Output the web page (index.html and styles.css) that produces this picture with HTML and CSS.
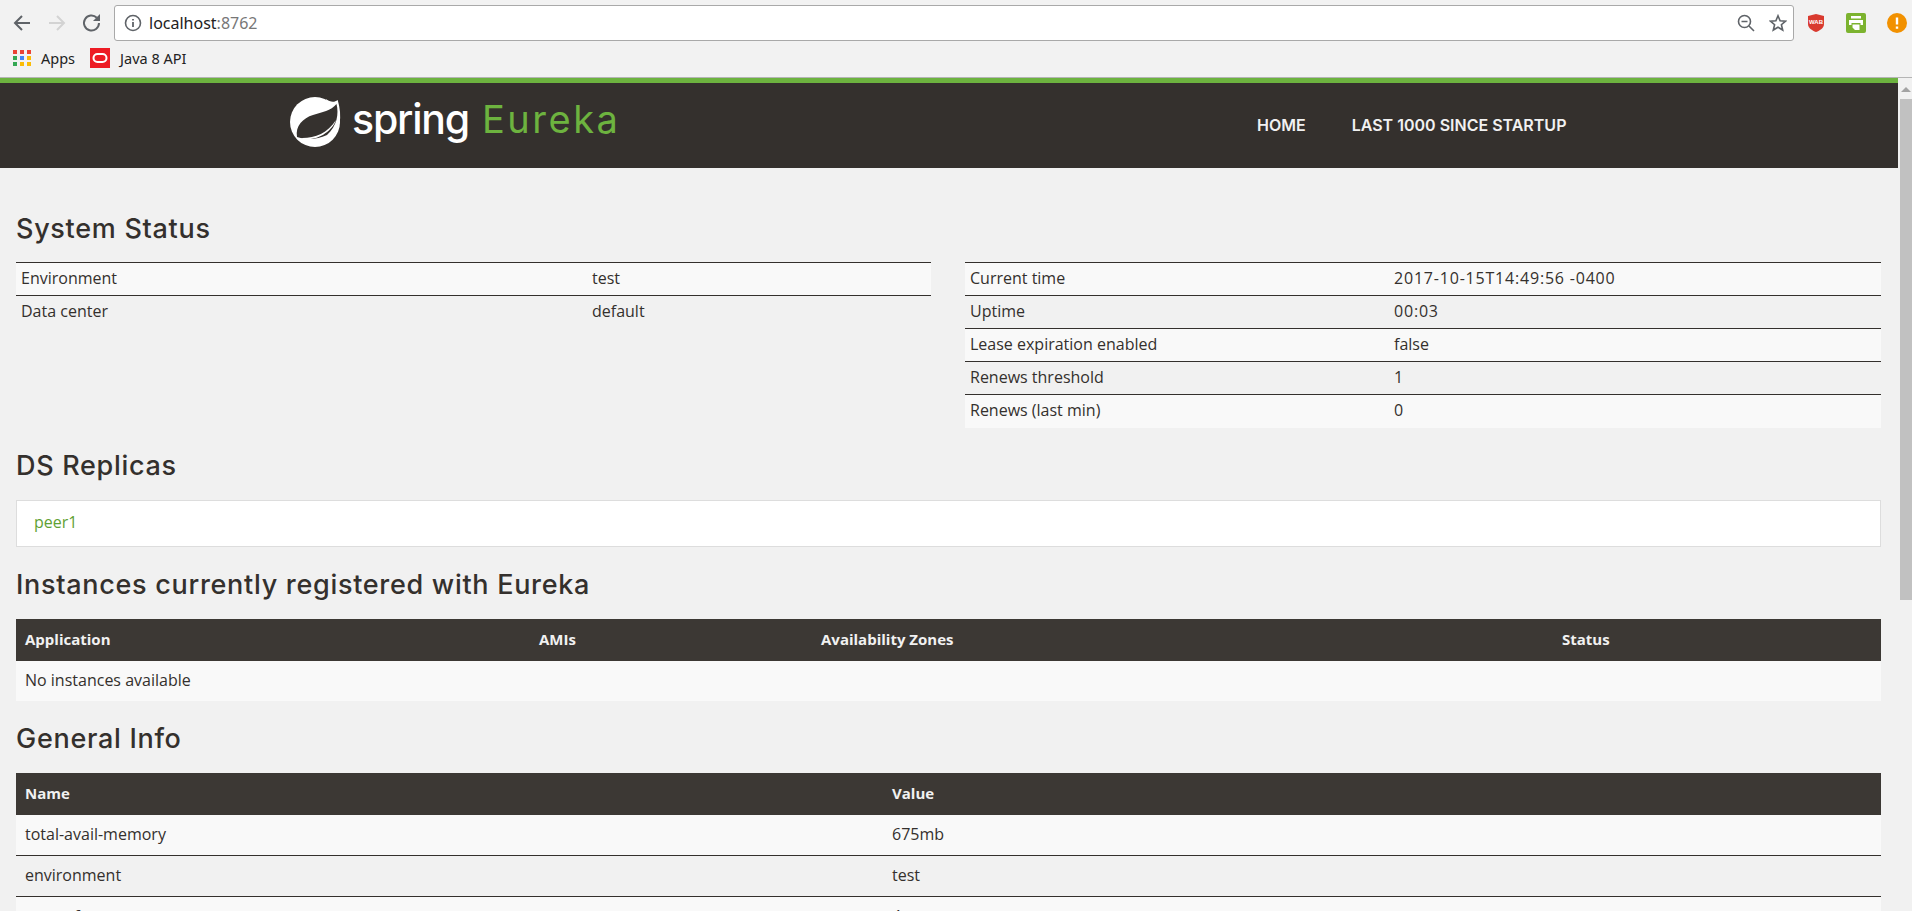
FILE: index.html
```html
<!DOCTYPE html>
<html>

<head>
    <title>Eureka</title>
<meta name="viewport" content="width=device-width, initial-scale=1">
<link rel="stylesheet" href="styles.css">
</head>

<body>

<!-- browser toolbar -->
<div class="toolbar">
    <svg class="tool" width="22" height="22" viewBox="0 0 22 22"><path d="M19 11H4M11 4l-7 7 7 7" fill="none" stroke="#5f6368" stroke-width="2"/></svg>
    <svg class="tool" width="22" height="22" viewBox="0 0 22 22"><path d="M3 11h15M11 4l7 7-7 7" fill="none" stroke="#d3d3d3" stroke-width="2"/></svg>
    <svg class="tool" width="22" height="22" viewBox="0 0 22 22"><path d="M18 11a7.5 7.5 0 1 1-2.2-5.3" fill="none" stroke="#5f6368" stroke-width="2"/><path d="M19 2v7h-7z" fill="#5f6368"/></svg>
    <div class="omnibox">
        <svg width="18" height="18" viewBox="0 0 18 18"><circle cx="9" cy="9" r="7.5" fill="none" stroke="#5f6368" stroke-width="1.6"/><path d="M9 8v5M9 5v1.6" stroke="#5f6368" stroke-width="1.8"/></svg>
        <span class="url">localhost<span class="port">:8762</span></span>
        <svg class="zoom-icon" width="18" height="18" viewBox="0 0 18 18"><circle cx="7.5" cy="7.5" r="6" fill="none" stroke="#5f6368" stroke-width="1.6"/><path d="M4.5 7.5h6M12 12l5 5" stroke="#5f6368" stroke-width="1.6"/></svg>
        <svg width="18" height="18" viewBox="0 0 18 18"><path d="M9 1.800l2.100 5 5.400.4-4.100 3.500 1.300 5.300L9 13.200l-4.700 2.800 1.300-5.300-4.100-3.500 5.400-.4z" fill="none" stroke="#5f6368" stroke-width="1.6"/></svg>
    </div>
    <div class="extensions">
        <svg width="18" height="20" viewBox="0 0 18 20"><path d="M1 3l8-2 8 2v8c0 4-4 6.500-8 8-4-1.500-8-4-8-8z" fill="#d93a2f"/><text x="9" y="11" class="wab">WAB</text></svg>
        <svg width="20" height="20" viewBox="0 0 20 20"><rect width="20" height="20" rx="2" fill="#7cb32f"/><path d="M5 3h10v2.500H5zM3 7h14v5h-2.500v-2h-9v2H3zM6.500 11.500h7V17H9l-2.500-2.500z" fill="#fff"/></svg>
        <svg width="20" height="20" viewBox="0 0 20 20"><circle cx="10" cy="10" r="10" fill="#f29100"/><path d="M10 4.500v7M10 13.500v2.200" stroke="#fff" stroke-width="2.400"/></svg>
    </div>
</div>

<div class="bookmarks">
    <span class="bookmark">
        <svg width="18" height="18" viewBox="0 0 18 18">
            <rect x="0" y="1" width="4" height="4" fill="#ea4335"/><rect x="7" y="1" width="4" height="4" fill="#ea4335"/><rect x="14" y="1" width="4" height="4" fill="#ea4335"/>
            <rect x="0" y="7" width="4" height="4" fill="#34a853"/><rect x="7" y="7" width="4" height="4" fill="#4285f4"/><rect x="14" y="7" width="4" height="4" fill="#fbbc05"/>
            <rect x="0" y="13" width="4" height="4" fill="#34a853"/><rect x="7" y="13" width="4" height="4" fill="#fbbc05"/><rect x="14" y="13" width="4" height="4" fill="#fbbc05"/>
        </svg>
        Apps
    </span>
    <span class="bookmark">
        <svg width="20" height="20" viewBox="0 0 20 20"><rect width="20" height="20" fill="#ed1c24"/><rect x="3.500" y="6" width="13" height="8" rx="4" fill="none" stroke="#fff" stroke-width="2"/></svg>
        Java 8 API
    </span>
</div>

<div class="window">
    <div class="page">
        <nav class="navbar">
            <a class="brand">
                <svg width="52" height="52" viewBox="0 0 52 52">
                    <circle cx="26" cy="26" r="25" fill="#fff"/>
                    <path d="M37 3C41 6 45 7 48.700 4 C51 12 52 20 50.500 28 L40 14z" fill="#fff"/>
                    <path d="M8 41C6 30 14 22 24 19 C33 16 42 15 47.500 8 C50 18 48 30 38 39 C28 44 16 44 8 41z" fill="#35312e"/>
                    <path d="M10 42C24 43 38 38 47 24 C43 36 26 47 10 42z" fill="#fff"/>
                </svg>
                <span class="brand-spring">spring</span>
                <span class="brand-eureka">Eureka</span>
            </a>
            <div class="nav-links">
                <a>HOME</a>
                <a>LAST 1000 SINCE STARTUP</a>
            </div>
        </nav>

        <div class="container">
            <h2 class="first">System Status</h2>
            <div class="columns">
                <table class="status status-left">
                    <tr><td>Environment</td><td>test</td></tr>
                    <tr><td>Data center</td><td>default</td></tr>
                </table>
                <table class="status status-right">
                    <tr><td>Current time</td><td class="num">2017-10-15T14:49:56 -0400</td></tr>
                    <tr><td>Uptime</td><td class="num">00:03</td></tr>
                    <tr><td>Lease expiration enabled</td><td>false</td></tr>
                    <tr><td>Renews threshold</td><td>1</td></tr>
                    <tr><td>Renews (last min)</td><td>0</td></tr>
                </table>
            </div>

            <h2>DS Replicas</h2>
            <div class="replicas"><a>peer1</a></div>

            <h2>Instances currently registered with Eureka</h2>
            <table class="data instances">
                <thead>
                    <tr><th>Application</th><th>AMIs</th><th>Availability Zones</th><th>Status</th></tr>
                </thead>
                <tbody>
                    <tr><td colspan="4">No instances available</td></tr>
                </tbody>
            </table>

            <h2>General Info</h2>
            <table class="data general">
                <thead>
                    <tr><th>Name</th><th>Value</th></tr>
                </thead>
                <tbody>
                    <tr><td>total-avail-memory</td><td>675mb</td></tr>
                    <tr><td>environment</td><td>test</td></tr>
                    <tr><td>num-of-cpus</td><td>4</td></tr>
                </tbody>
            </table>
        </div>
    </div>

    <div class="scrollbar">
        <div class="scroll-arrow"></div>
        <div class="scroll-thumb"></div>
    </div>
</div>

</body>
</html>
```

FILE: styles.css
```css
* {
  box-sizing: border-box;
}

html, body {
  margin: 0;
  height: 911px;
  overflow: hidden;
}

body {
  background-color: #f1f1f1;
  font-family: "Open Sans", sans-serif;
  font-size: 16px;
  color: #34302d;
}

/* Browser chrome */
.toolbar {
  height: 46px;
  display: flex;
  align-items: center;
  padding: 0 0 0 11px;
  background-color: #f2f2f2;
}

.tool {
  margin-right: 13px;
}

.omnibox {
  width: 1680px;
  height: 36px;
  margin-left: -2px;
  display: flex;
  align-items: center;
  gap: 7px;
  padding: 0 6px 0 9px;
  background-color: #fff;
  border: 1px solid #a9a9a9;
  border-radius: 3px;
}

.url {
  flex: 1;
  font-family: "Noto Sans", sans-serif;
  font-size: 16px;
  color: #222;
}

.port {
  color: #777;
}

.zoom-icon {
  margin-right: 7px;
}

.extensions {
  display: flex;
  align-items: center;
  gap: 21px;
  margin-left: 13px;
}

.wab {
  font-family: "Liberation Sans", sans-serif;
  font-size: 6px;
  font-weight: bold;
  fill: #fff;
  text-anchor: middle;
}

.bookmarks {
  height: 32px;
  display: flex;
  align-items: center;
  gap: 15px;
  padding: 0 0 7px 13px;
  background-color: #f2f2f2;
  border-bottom: 1px solid #b5b5b5;
  font-family: "Noto Sans", sans-serif;
  font-size: 14.500px;
  color: #222;
}

.bookmark {
  display: flex;
  align-items: center;
  gap: 10px;
}

/* Page area */
.window {
  display: flex;
  height: 833px;
}

.page {
  flex: 1;
  min-width: 0;
}

.scrollbar {
  width: 14px;
  background-color: #f1f1f1;
}

.scroll-arrow {
  width: 0;
  margin: 9px 0 0 3px;
  border-left: 5px solid transparent;
  border-right: 5px solid transparent;
  border-bottom: 5px solid #a3a3a3;
}

.scroll-thumb {
  height: 501px;
  margin: 7px 0 0 2px;
  background-color: #c1c1c1;
}

.navbar {
  height: 90px;
  display: flex;
  background-color: #34302d;
  border-top: 5px solid #6db33f;
}

.brand {
  display: flex;
  align-items: flex-start;
  padding: 13px 0 0 289px;
  width: 1257px;
}

.brand-spring {
  margin-left: 11px;
  font-family: "Inter", sans-serif;
  font-size: 41px;
  font-weight: 500;
  line-height: 46px;
  letter-spacing: -1.200px;
  color: #fff;
}

.brand-eureka {
  margin-left: 13px;
  font-family: "Inter", sans-serif;
  font-size: 38px;
  line-height: 46px;
  letter-spacing: 2.500px;
  color: #6db33f;
}

.nav-links {
  display: flex;
  gap: 46px;
  padding-top: 32px;
  font-family: "Inter", sans-serif;
  font-size: 16px;
  font-weight: 600;
  line-height: 20px;
  color: #f1f1f1;
}

.container {
  padding: 46px 17px 0 16px;
}

h2 {
  margin: 23px 0 19px;
  font-family: "Inter", sans-serif;
  font-size: 27px;
  font-weight: 500;
  line-height: 30px;
  letter-spacing: .7px;
  color: #34302d;
}

h2.first {
  margin-top: 0;
  margin-bottom: 18px;
}

.columns {
  display: flex;
  align-items: flex-start;
  gap: 34px;
  height: 166px;
}

table {
  width: 100%;
  border-collapse: collapse;
  table-layout: fixed;
}

.status-left {
  flex: none;
  width: 915px;
}

.status-right {
  flex: none;
  width: 916px;
}

.status td {
  height: 33px;
  padding: 0 5px 2px;
  border-top: 1px solid #34302d;
}

.status tr:nth-child(odd) {
  background-color: #f9f9f9;
}

.status-left td:first-child {
  width: 571px;
}

.status-right td:first-child {
  width: 424px;
}

.num {
  letter-spacing: .8px;
}

.replicas {
  height: 47px;
  padding: 11px 17px;
  background-color: #fff;
  border: 1px solid #ddd;
  line-height: 20px;
}

.replicas a {
  color: #5fa134;
}

.data th {
  height: 42px;
  padding: 0 9px 3px;
  text-align: left;
  font-size: 15px;
  font-weight: 700;
  background-color: #3c3834;
  color: #f1f1f1;
}

.data td {
  height: 41px;
  padding: 0 9px 2px;
  border-top: 1px solid #34302d;
}

.data tbody tr:nth-child(odd) {
  background-color: #f9f9f9;
}

.data tbody tr:first-child td {
  height: 40px;
  border-top: none;
}

.instances th:nth-child(1) {
  width: 514px;
}

.instances th:nth-child(2) {
  width: 282px;
}

.instances th:nth-child(3) {
  width: 741px;
}

.general th:nth-child(1) {
  width: 867px;
}
```
